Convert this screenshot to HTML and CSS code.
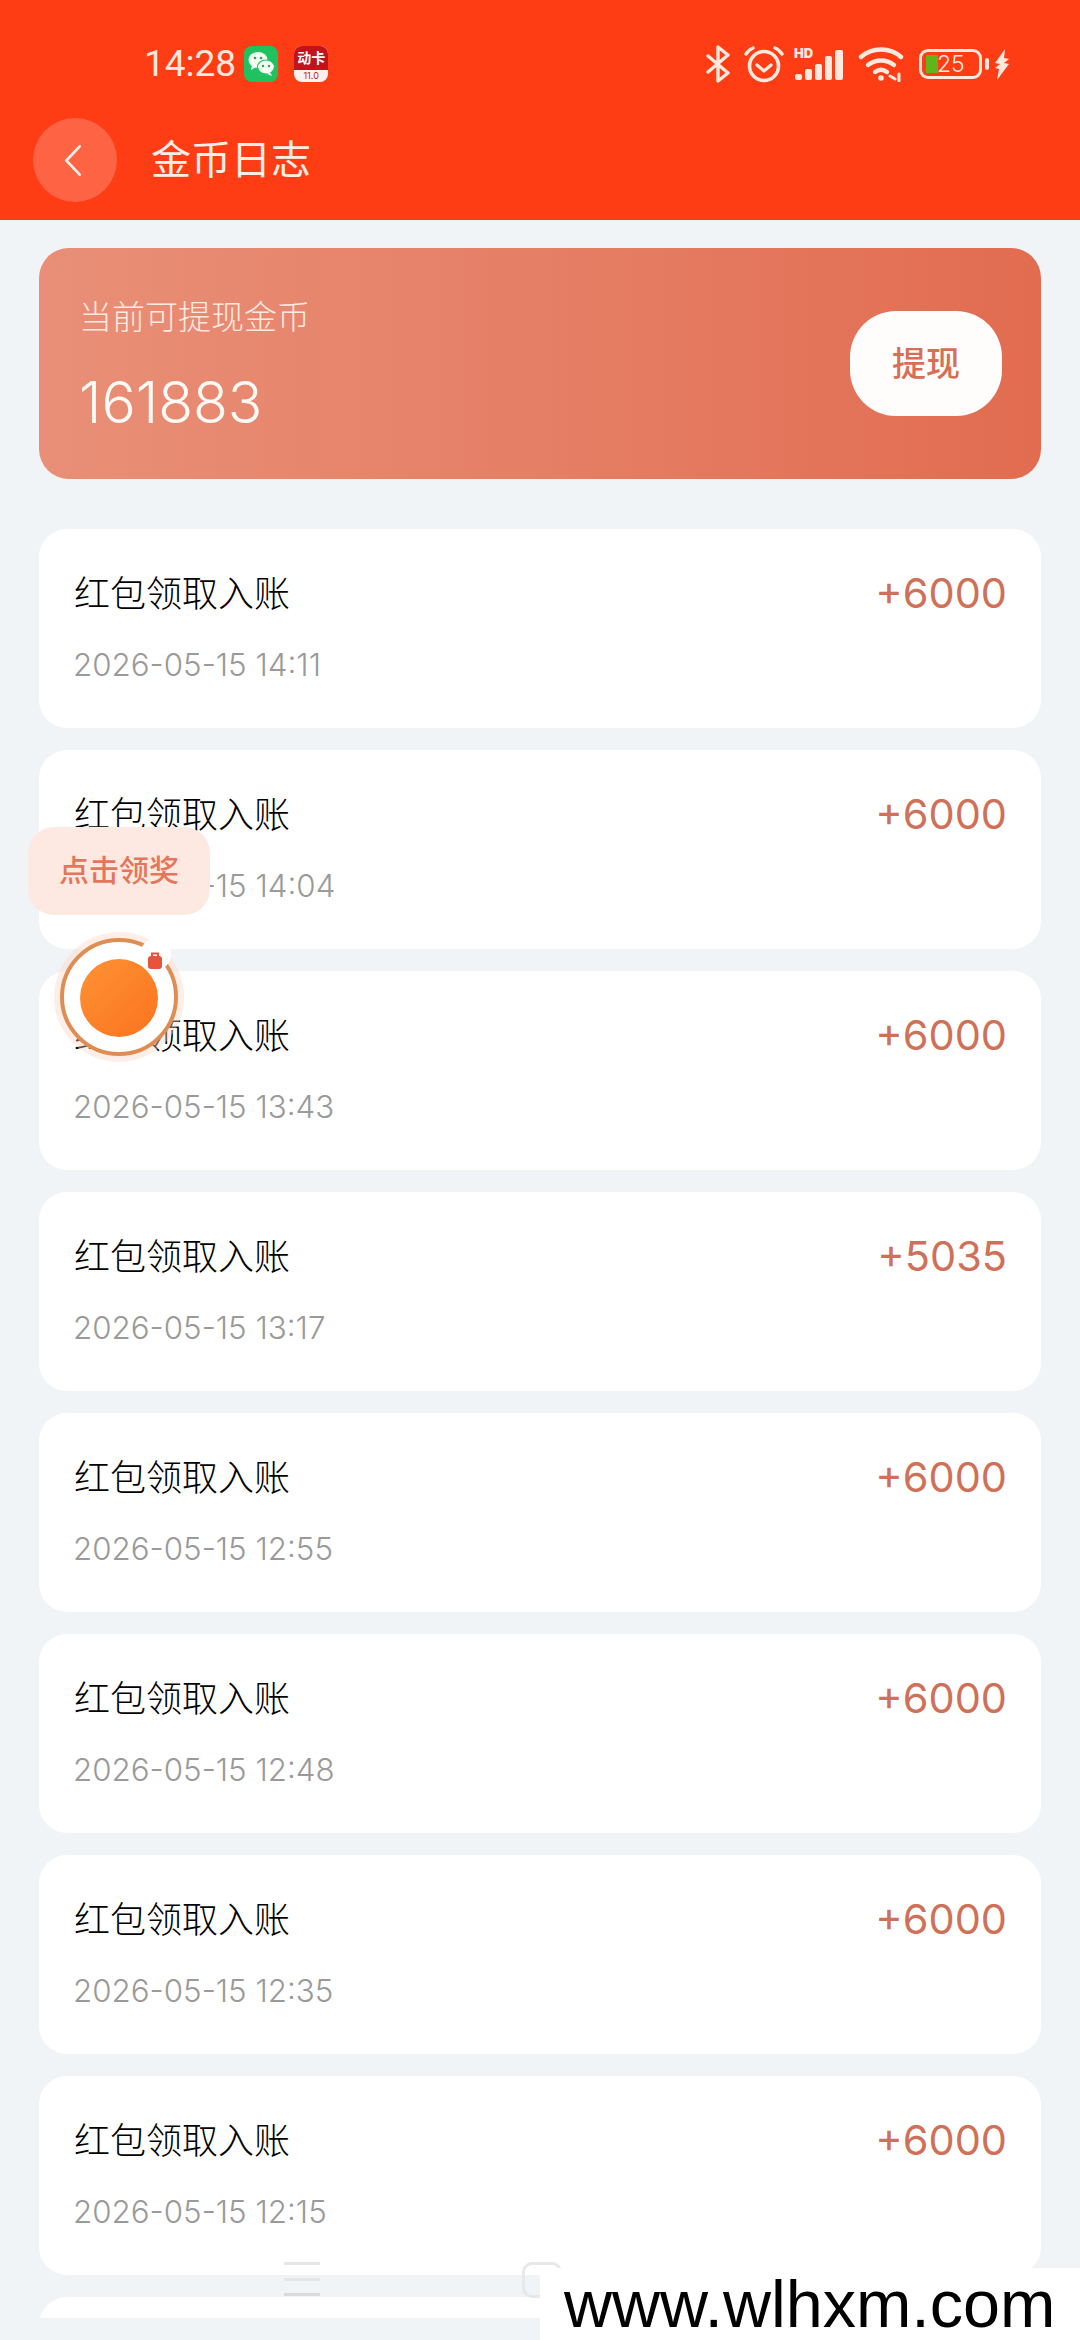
FILE: index.html
```html
<!DOCTYPE html>
<html lang="zh-CN">
<head>
    <meta charset="UTF-8">
    <meta name="viewport" content="width=device-width, initial-scale=1.0">
    <title>金币日志</title>
    <link rel="stylesheet" href="styles.css">
</head>
<body>
    <div id="page">
        <header id="topbar">
            <div class="status">
                <div class="status-left">
                    <span class="clock">14:28</span>
                    <svg class="app-icon" viewBox="0 0 34 36">
                        <rect width="34" height="36" rx="8" fill="#1fc25f"/>
                        <ellipse cx="14" cy="14" rx="9.5" ry="8" fill="#f3fff5"/>
                        <path d="M8 19l-1 5 5-3z" fill="#f3fff5"/>
                        <ellipse cx="22" cy="21" rx="8.5" ry="7" fill="#f3fff5" stroke="#1fc25f" stroke-width="1.2"/>
                        <path d="M26 26l2 4-5-2z" fill="#f3fff5"/>
                        <circle cx="11" cy="12" r="1.3" fill="#3a9a5e"/>
                        <circle cx="17" cy="12" r="1.3" fill="#3a9a5e"/>
                        <circle cx="19" cy="20" r="1.2" fill="#3a9a5e"/>
                        <circle cx="25" cy="20" r="1.2" fill="#3a9a5e"/>
                    </svg>
                    <div class="card-app">
                        <span class="card-app-name">动卡</span>
                        <span class="card-app-ver">11.0</span>
                    </div>
                </div>
                <div class="status-right">
                    <svg class="ic-bt" viewBox="0 0 24 38" fill="none" stroke="#ffe8de" stroke-width="3.4" stroke-linejoin="round" stroke-linecap="round">
                        <path d="M2 11l20 17-10 8V2l10 8L2 27"/>
                    </svg>
                    <svg class="ic-alarm" viewBox="0 0 40 38" fill="none" stroke="#ffe8de" stroke-linecap="round">
                        <circle cx="20" cy="21" r="14.5" stroke-width="3.6"/>
                        <path d="M13 20l7 6 7-6" stroke-width="3.2" stroke-linejoin="round"/>
                        <path d="M2 9c2-3 4-5 7-6M38 9c-2-3-4-5-7-6" stroke-width="3.4"/>
                    </svg>
                    <div class="signal">
                        <span class="hd">HD</span>
                        <span class="bar b1"></span>
                        <span class="bar b2"></span>
                        <span class="bar b3"></span>
                        <span class="bar b4"></span>
                        <span class="bar b5"></span>
                    </div>
                    <svg class="ic-wifi" viewBox="0 0 46 36" fill="none" stroke="#ffe8de" stroke-width="4.4" stroke-linecap="round">
                        <path d="M3 11C14 1 32 1 43 11"/>
                        <path d="M10 19c8-6 18-6 26 0"/>
                        <path d="M17 26c4-3 8-3 12 0"/>
                        <circle cx="23" cy="32" r="1.8" fill="#ffe8de" stroke-width="2"/>
                        <path d="M32 30l5 3M41 28v7" stroke-width="3"/>
                    </svg>
                    <div class="battery">
                        <div class="battery-body">
                            <span class="battery-fill"></span>
                            <span class="battery-num">25</span>
                        </div>
                        <span class="battery-nub"></span>
                    </div>
                    <svg class="ic-bolt" viewBox="0 0 16 31">
                        <path d="M11 0L1 14l5 1-5 4 4 1-2 11L15 15l-5-1 5-4-5-1z" fill="#ffe8de"/>
                    </svg>
                </div>
            </div>
            <div class="navrow">
                <div class="back">
                    <svg viewBox="0 0 24 40" fill="none" stroke="#ffeee8" stroke-width="3.2" stroke-linecap="round" stroke-linejoin="round">
                        <path d="M20 3L4 20l16 17"/>
                    </svg>
                </div>
                <h1 class="title">金币日志</h1>
            </div>
        </header>

        <main id="content">
            <section class="balance">
                <div class="balance-text">
                    <div class="balance-label">当前可提现金币</div>
                    <div class="balance-num">161883</div>
                </div>
                <div class="withdraw">提现</div>
            </section>

            <div class="log-list">
                <div class="log-item">
                    <div class="log-row"><span class="log-name">红包领取入账</span><span class="log-amount">+6000</span></div>
                    <div class="log-date">2026-05-15 14:11</div>
                </div>
                <div class="log-item">
                    <div class="log-row"><span class="log-name">红包领取入账</span><span class="log-amount">+6000</span></div>
                    <div class="log-date">2026-05-15 14:04</div>
                </div>
                <div class="log-item">
                    <div class="log-row"><span class="log-name">红包领取入账</span><span class="log-amount">+6000</span></div>
                    <div class="log-date">2026-05-15 13:43</div>
                </div>
                <div class="log-item">
                    <div class="log-row"><span class="log-name">红包领取入账</span><span class="log-amount">+5035</span></div>
                    <div class="log-date">2026-05-15 13:17</div>
                </div>
                <div class="log-item">
                    <div class="log-row"><span class="log-name">红包领取入账</span><span class="log-amount">+6000</span></div>
                    <div class="log-date">2026-05-15 12:55</div>
                </div>
                <div class="log-item">
                    <div class="log-row"><span class="log-name">红包领取入账</span><span class="log-amount">+6000</span></div>
                    <div class="log-date">2026-05-15 12:48</div>
                </div>
                <div class="log-item">
                    <div class="log-row"><span class="log-name">红包领取入账</span><span class="log-amount">+6000</span></div>
                    <div class="log-date">2026-05-15 12:35</div>
                </div>
                <div class="log-item">
                    <div class="log-row"><span class="log-name">红包领取入账</span><span class="log-amount">+6000</span></div>
                    <div class="log-date">2026-05-15 12:15</div>
                </div>
                <div class="log-item"></div>
            </div>
        </main>

        <!-- floating reward button -->
        <div class="reward-tip">点击领奖</div>
        <div class="reward-ball">
            <span class="reward-core"></span>
            <span class="reward-notch"></span>
            <svg class="reward-bag" viewBox="0 0 14 17">
                <path d="M4 4V1.500h6V4" fill="none" stroke="#e8533a" stroke-width="2"/>
                <rect y="4" width="14" height="13" rx="3" fill="#e8533a"/>
            </svg>
        </div>

        <div class="bottom-strip"></div>
        <div class="nav-menu"></div>
        <div class="nav-home"></div>
        <div class="watermark">www.wlhxm.com</div>
    </div>
</body>
</html>
```

FILE: styles.css
```css
* {
    box-sizing: border-box;
}

body {
    margin: 0;
    padding: 0;
    font-family: Inter, "Noto Sans CJK SC", sans-serif;
    background-color: #f1f4f7;
}

#page {
    position: relative;
    width: 1080px;
    height: 2340px;
    overflow: hidden;
    background-color: #f1f4f7;
}

/* top red area */
#topbar {
    height: 220px;
    background-color: #fe3d15;
    color: #ffeee8;
}

.status {
    display: flex;
    justify-content: space-between;
    align-items: center;
    height: 118px;
    padding: 10px 70px 0 144px;
}

.status-left {
    display: flex;
    align-items: center;
}

.clock {
    font-family: Roboto, sans-serif;
    font-size: 37px;
    line-height: 44px;
    color: #ffe8de;
}

.app-icon {
    width: 34px;
    height: 36px;
    margin-left: 8px;
}

.card-app {
    display: flex;
    flex-direction: column;
    width: 34px;
    height: 36px;
    margin-left: 16px;
    border-radius: 8px;
    overflow: hidden;
    background-color: #fff2ee;
    text-align: center;
}

.card-app-name {
    height: 24px;
    background-color: #c4121c;
    color: #fff;
    font-size: 14px;
    font-weight: 700;
    line-height: 24px;
    white-space: nowrap;
}

.card-app-ver {
    color: #b8232c;
    font-size: 9px;
    line-height: 12px;
}

.status-right {
    display: flex;
    align-items: center;
}

.ic-bt {
    width: 24px;
    height: 38px;
}

.ic-alarm {
    width: 40px;
    height: 38px;
    margin-left: 14px;
}

.signal {
    position: relative;
    display: flex;
    align-items: flex-end;
    gap: 3px;
    width: 51px;
    height: 32px;
    margin-left: 11px;
}

.hd {
    position: absolute;
    top: -2px;
    left: -1px;
    color: #ffe8de;
    font-size: 13px;
    font-weight: 900;
    line-height: 14px;
}

.bar {
    width: 7px;
    border-radius: 2px;
    background-color: #ffe8de;
}

.b1 { height: 6px; }
.b2 { height: 11px; }
.b3 { height: 16px; }
.b4 { height: 24px; }
.b5 { width: 8px; height: 30px; }

.ic-wifi {
    width: 46px;
    height: 36px;
    margin-left: 12px;
}

.battery {
    display: flex;
    align-items: center;
    margin-left: 15px;
}

.battery-body {
    position: relative;
    width: 63px;
    height: 30px;
    border: 3px solid #ffe8de;
    border-radius: 9px;
}

.battery-fill {
    position: absolute;
    top: 3px;
    left: 4px;
    width: 12px;
    height: 18px;
    background-color: #62b41a;
}

.battery-num {
    position: absolute;
    top: 0;
    left: 15px;
    color: #ffe8de;
    font-size: 23px;
    font-weight: 300;
    line-height: 24px;
}

.battery-nub {
    width: 4px;
    height: 12px;
    margin-left: 3px;
    border-radius: 2px;
    background-color: #ffe8de;
}

.ic-bolt {
    width: 16px;
    height: 31px;
    margin-left: 5px;
}

.navrow {
    display: flex;
    align-items: center;
    padding-left: 33px;
}

.back {
    display: flex;
    align-items: center;
    justify-content: center;
    width: 84px;
    height: 84px;
    border-radius: 50%;
    background-color: rgba(255, 255, 255, 0.2);
}

.back svg {
    width: 20px;
    height: 37px;
    margin-left: -4px;
}

.title {
    margin: 0 0 0 34px;
    font-size: 40px;
    font-weight: 400;
    line-height: 50px;
}

/* main */
#content {
    padding: 28px 39px 0 39px;
}

.balance {
    display: flex;
    align-items: center;
    justify-content: space-between;
    height: 231px;
    margin-bottom: 50px;
    padding: 0 39px 0 40px;
    border-radius: 30px;
    background: linear-gradient(90deg, #e98f77, #e57f66 50%, #e26c50);
}

.balance-label {
    color: #ffe9e1;
    font-size: 33px;
    font-weight: 300;
    line-height: 44px;
}

.balance-num {
    margin-top: 32px;
    padding-top: 2px;
    color: #fffaf6;
    font-size: 57px;
    font-weight: 300;
    line-height: 60px;
}

.withdraw {
    width: 152px;
    height: 105px;
    border-radius: 46px;
    background-color: #fffdfb;
    color: #d66f55;
    font-size: 34px;
    font-weight: 500;
    line-height: 105px;
    text-align: center;
}

.log-list {
    display: flex;
    flex-direction: column;
    gap: 22px;
}

.log-item {
    flex: none;
    height: 199px;
    padding: 42px 34px 0 35px;
    border-radius: 28px;
    background-color: #fff;
}

.log-row {
    display: flex;
    justify-content: space-between;
    align-items: center;
    height: 44px;
}

.log-name {
    padding-top: 2px;
    color: #000;
    font-size: 36px;
    font-weight: 300;
    line-height: 44px;
}

.log-amount {
    color: #cf7058;
    font-size: 41.5px;
    line-height: 44px;
}

.log-date {
    margin: 30px 0 0 -1px;
    color: #9a9a9a;
    font-size: 31.300px;
    font-weight: 300;
    line-height: 40px;
}

/* floating things on top of the list */
.reward-tip {
    position: absolute;
    top: 827px;
    left: 28px;
    width: 182px;
    height: 88px;
    border-radius: 26px;
    background-color: #fde9e1;
    color: #e5755b;
    font-size: 30px;
    font-weight: 500;
    line-height: 86px;
    text-align: center;
}

.reward-ball {
    position: absolute;
    top: 938px;
    left: 60px;
    width: 118px;
    height: 118px;
    border: 4px solid #e08d53;
    border-radius: 50%;
    background-color: #fff;
    box-shadow: 0 0 0 6px rgba(250, 215, 195, 0.4);
}

.reward-core {
    position: absolute;
    top: 17px;
    left: 16px;
    width: 78px;
    height: 78px;
    border-radius: 50%;
    background: linear-gradient(135deg, #ff9234, #fa731f);
}

.reward-notch {
    position: absolute;
    top: -3px;
    left: 76px;
    width: 31px;
    height: 31px;
    border-radius: 50%;
    background-color: #fff;
}

.reward-bag {
    position: absolute;
    top: 10px;
    left: 84px;
    width: 14px;
    height: 17px;
}

.bottom-strip {
    position: absolute;
    top: 2318px;
    left: 0;
    width: 100%;
    height: 22px;
    background-color: #f1f4f7;
}

.nav-menu {
    position: absolute;
    top: 2262px;
    left: 284px;
    width: 36px;
    height: 34px;
    border-top: 3px solid #e4e6e8;
    border-bottom: 3px solid #d8dadc;
    background: linear-gradient(#e4e6e8, #e4e6e8) center / 100% 3px no-repeat;
}

.nav-home {
    position: absolute;
    top: 2262px;
    left: 522px;
    width: 40px;
    height: 36px;
    border: 3px solid #e6e8ea;
    border-radius: 10px;
}

.watermark {
    position: absolute;
    top: 2268px;
    left: 540px;
    width: 540px;
    height: 72px;
    padding-left: 24px;
    background-color: #fff;
    color: #000;
    font-family: "Liberation Sans", sans-serif;
    font-size: 66.5px;
    line-height: 72px;
    white-space: nowrap;
}
```
